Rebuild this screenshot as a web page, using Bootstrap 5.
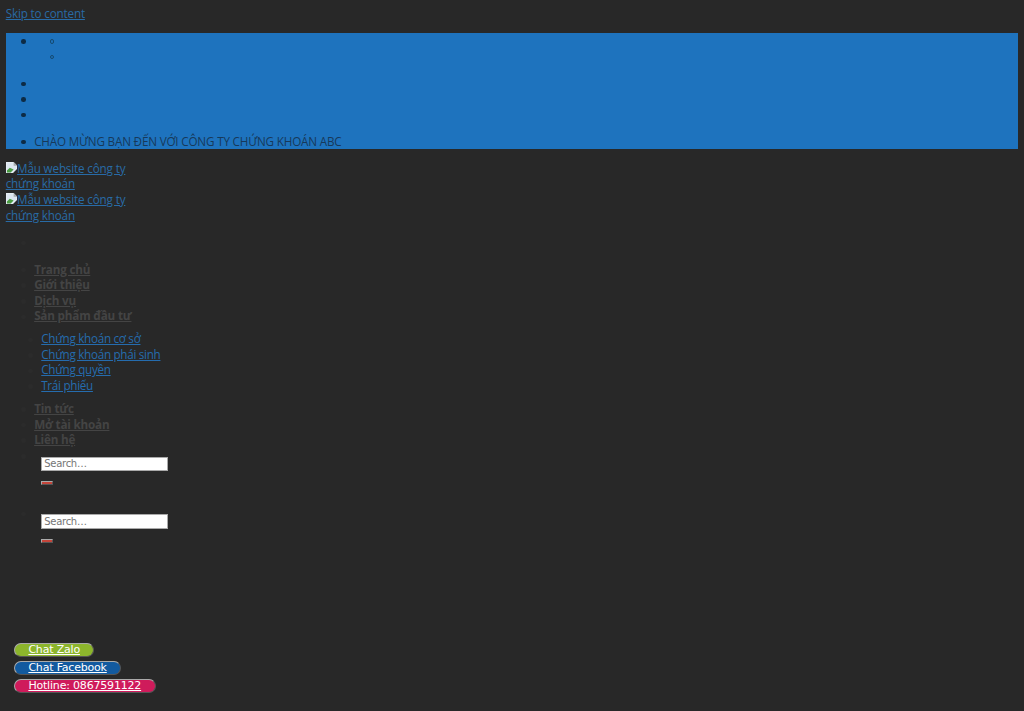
<!DOCTYPE html>
<html lang="vi">
<head>
<meta charset="utf-8">
<meta name="viewport" content="width=device-width, initial-scale=1">
<title>Mẫu website công ty chứng khoán</title>
<link href="https://cdn.jsdelivr.net/npm/bootstrap@5.3.0/dist/css/bootstrap.min.css" rel="stylesheet">
<style>
:root{--ln:15.64px;--gap:11.38px;--dot:#0d2b45}
body{background:#282828;color:#0a3a60;font:11.7px/15.64px "Open Sans","Noto Sans",sans-serif;letter-spacing:-.17px;padding:5.69px;height:711px;overflow:hidden}
a{color:#286ba6;text-decoration:underline}
a:hover{color:#286ba6}
ul{padding-left:28.44px;margin-bottom:var(--gap);list-style:none}
ul ul{margin-bottom:0}
li{min-height:var(--ln);position:relative}
li::before{content:"";position:absolute;left:-13px;top:6.3px;width:4.6px;height:4.6px;border-radius:50%;background:var(--dot)}
.topbar ul ul li::before{background:none;border:1px solid #154a70}
.skip{margin-bottom:var(--gap)}
.topbar{background:#1e73be;margin-bottom:var(--gap)}
.topbar ul:last-child{margin-bottom:0}
.topbar .msg{color:#17395a;letter-spacing:-.19px}
.logo{width:128px;margin-bottom:var(--gap)}
.logo svg{width:11.4px;height:11.4px;vertical-align:-.5px}
.dim{--dot:#2b2b2b}
.menu{margin-bottom:0}
.menu a{color:#444;font-weight:700;letter-spacing:-.19px}
.menu .sub{padding:7.11px 0 7.11px 7.11px}
.menu .sub a{color:#256cae;font-weight:400;letter-spacing:-.3px}
.finder{padding:8.9px 0 0 7.11px;height:57.7px}
.finder input{width:127.2px;height:14.4px;border:1px solid #aaa;border-radius:0;padding:0 2px;font:10px/12px "DejaVu Sans",sans-serif;letter-spacing:-.28px;background:#fff}
.finder input::placeholder{color:#757575;opacity:1}
.finder button{width:11.4px;height:4.6px;padding:0;border:1.4px outset #aaa;background:#c5453a;margin-top:9.8px}
.chats{margin:79.9px 0 0 8.3px;font:11px/12px "DejaVu Sans",sans-serif;letter-spacing:-.19px;gap:3.7px}
.chats a{color:#fff;height:14.2px;line-height:11.6px;padding:0 13.4px;border:1.4px outset #aaa;border-radius:8px;white-space:nowrap}
.zalo{background:#8cb52c}
.face{background:#125a9f}
.hot{background:#cf1b5b}
</style>
</head>
<body>
<div class="skip"><a href="#main">Skip to content</a></div>
<header>
  <div class="topbar">
    <ul>
      <li><ul><li></li><li></li></ul></li>
    </ul>
    <ul><li></li><li></li><li></li></ul>
    <ul><li class="msg">CHÀO MỪNG BẠN ĐẾN VỚI CÔNG TY CHỨNG KHOÁN ABC</li></ul>
  </div>
  <div class="logo">
    <a class="d-block" href="#"><svg viewBox="0 0 12 12"><path d="M0 0h8l4 4v3L7 12H0z" fill="#e6edf2"/><path d="M1 1h7v3h3v2L6 11H1z" fill="#dce6f0"/><path d="M1 11V9l3-3 4 2-3 3z" fill="#4b9d42"/><path d="M8 0v4h4z" fill="#a5a9ad"/></svg>Mẫu website công ty chứng khoán</a>
    <a class="d-block" href="#"><svg viewBox="0 0 12 12"><path d="M0 0h8l4 4v3L7 12H0z" fill="#e6edf2"/><path d="M1 1h7v3h3v2L6 11H1z" fill="#dce6f0"/><path d="M1 11V9l3-3 4 2-3 3z" fill="#4b9d42"/><path d="M8 0v4h4z" fill="#a5a9ad"/></svg>Mẫu website công ty chứng khoán</a>
  </div>
  <ul class="dim"><li></li></ul>
  <ul class="dim menu" id="main">
    <li><a href="#">Trang chủ</a></li>
    <li><a href="#">Giới thiệu</a></li>
    <li><a href="#">Dịch vụ</a></li>
    <li><a href="#">Sản phẩm đầu tư</a>
      <ul class="sub">
        <li><a href="#">Chứng khoán cơ sở</a></li>
        <li><a href="#">Chứng khoán phái sinh</a></li>
        <li><a href="#">Chứng quyền</a></li>
        <li><a href="#">Trái phiếu</a></li>
      </ul>
    </li>
    <li><a href="#">Tin tức</a></li>
    <li><a href="#">Mở tài khoản</a></li>
    <li><a href="#">Liên hệ</a></li>
    <li><form class="finder d-flex flex-column align-items-start"><input type="search" placeholder="Search…" aria-label="Search"><button type="button" aria-label="Submit"></button></form></li>
    <li><form class="finder d-flex flex-column align-items-start"><input type="search" placeholder="Search…" aria-label="Search"><button type="button" aria-label="Submit"></button></form></li>
  </ul>
</header>
<div class="chats d-flex flex-column align-items-start">
  <a class="zalo" href="#">Chat Zalo</a>
  <a class="face" href="#">Chat Facebook</a>
  <a class="hot" href="#">Hotline: 0867591122</a>
</div>
<script src="https://cdn.jsdelivr.net/npm/bootstrap@5.3.0/dist/js/bootstrap.bundle.min.js"></script>
</body>
</html>
